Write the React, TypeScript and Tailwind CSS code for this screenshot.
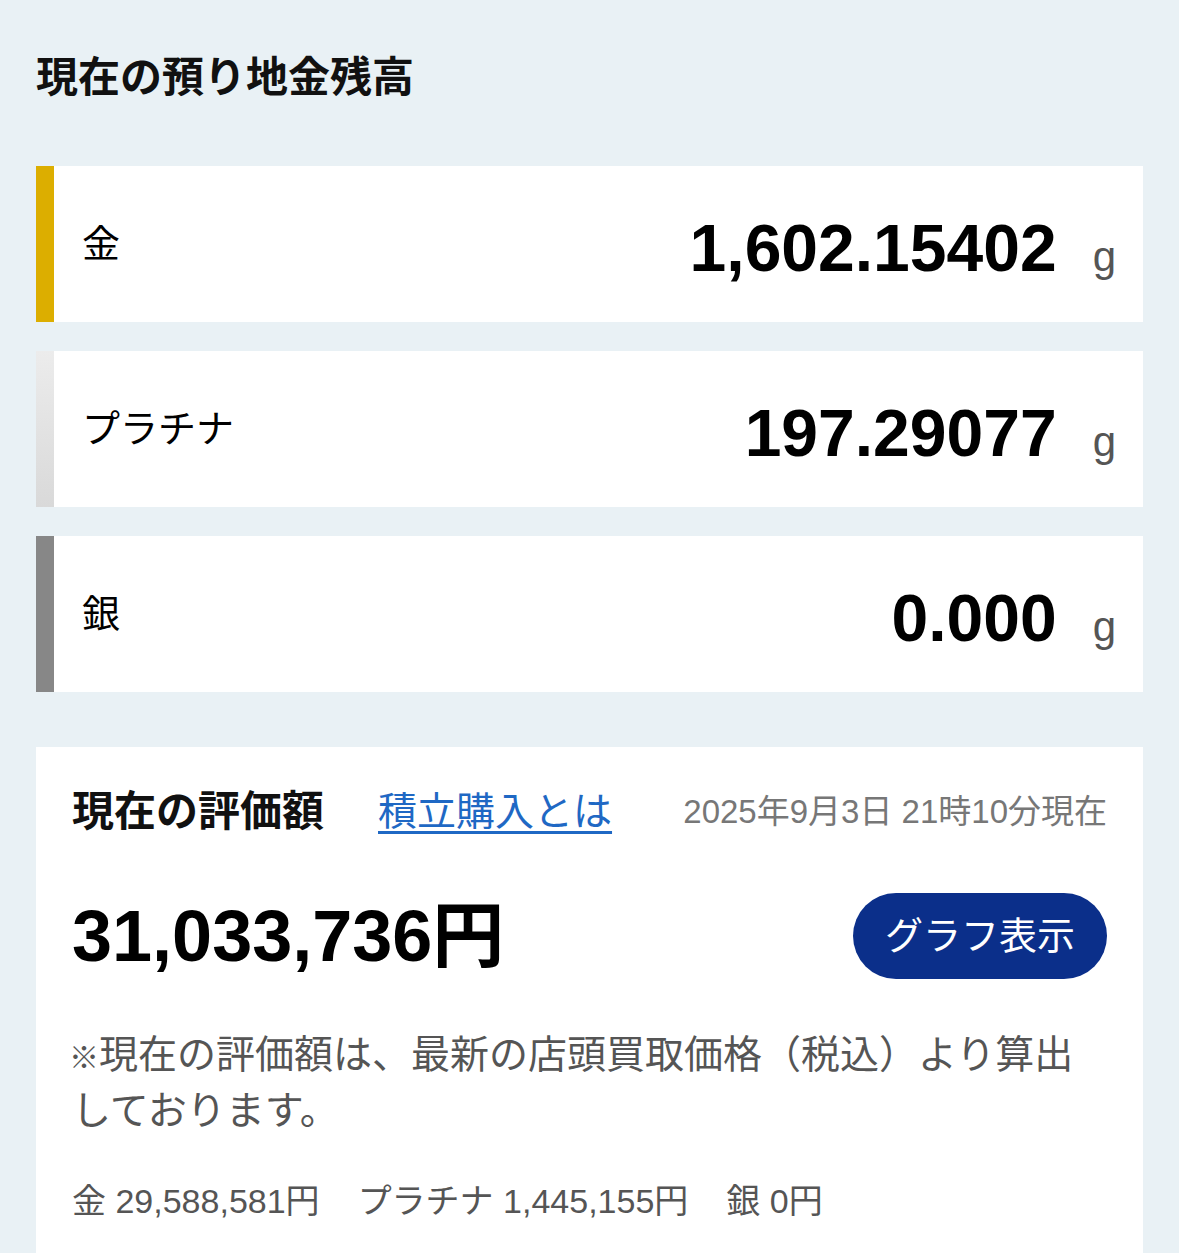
import React from "react";

const FONT = { fontFamily: '"Liberation Sans", "Noto Sans CJK JP", sans-serif' };

function MetalCard({ label, value, bar }: { label: string; value: string; bar: string }) {
  return (
    <div className="flex h-[156px] bg-white">
      <div className={`w-[18px] shrink-0 ${bar}`} />
      <div className="flex flex-1 items-center justify-between pl-[28px] pr-[27px]">
        <div className="text-[38px] leading-none text-black">{label}</div>
        <div className="flex items-baseline pt-[8px]">
          <span className="text-[66px] font-bold leading-none text-black">{value}</span>
          <span className="ml-[36px] text-[42px] leading-none text-[#555]">g</span>
        </div>
      </div>
    </div>
  );
}

export default function App() {
  return (
    <div className="min-h-screen bg-[#e9f1f5] px-[36px] pt-[53px]" style={FONT}>
      <h1 className="text-[42px] font-bold leading-[50px] text-[#111]">現在の預り地金残高</h1>
      <div className="mt-[63px] flex flex-col gap-[29px]">
        <MetalCard label="金" value="1,602.15402" bar="bg-[#dcae00]" />
        <MetalCard label="プラチナ" value="197.29077" bar="bg-gradient-to-b from-[#ececec] to-[#d9d9d9]" />
        <MetalCard label="銀" value="0.000" bar="bg-[#878787]" />
      </div>
      <div className="mt-[55px] bg-white px-[36px] pb-[40px] pt-[40px]">
        <div className="flex items-center">
          <div className="text-[42px] font-bold leading-[50px] text-[#111]">現在の評価額</div>
          <a className="ml-[54px] text-[39px] leading-[50px] text-[#1f68c4] underline decoration-[3px] underline-offset-[6px]">
            積立購入とは
          </a>
          <div className="ml-auto text-[33px] leading-[50px] text-[#777]">2025年9月3日 21時10分現在</div>
        </div>
        <div className="mt-[56px] flex items-center justify-between">
          <div className="text-[72px] font-bold leading-none text-black">31,033,736円</div>
          <button className="flex h-[86px] w-[254px] items-center justify-center rounded-full bg-[#0b2f8a] text-[38px] text-white">
            グラフ表示
          </button>
        </div>
        <p className="mt-[49px] text-[39px] leading-[53px] text-[#555]">
          <span className="ml-[-3px] text-[30px]">※</span>現在の評価額は、最新の店頭買取価格（税込）より算出
          <br />
          しております。
        </p>
        <div className="mt-[44px] flex items-center text-[34px] leading-[40px] text-[#555]">
          <span>金 29,588,581円</span>
          <span className="ml-[38px]">プラチナ 1,445,155円</span>
          <span className="ml-[38px]">銀 0円</span>
        </div>
      </div>
    </div>
  );
}
